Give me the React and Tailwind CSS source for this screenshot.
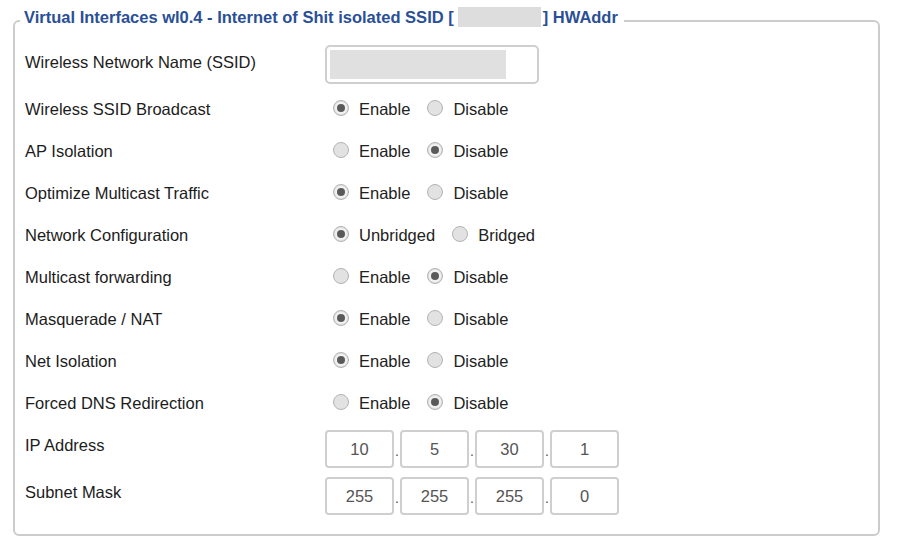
const radioRows = [
  { label: "Wireless SSID Broadcast", options: ["Enable", "Disable"], checked: 0 },
  { label: "AP Isolation", options: ["Enable", "Disable"], checked: 1 },
  { label: "Optimize Multicast Traffic", options: ["Enable", "Disable"], checked: 0 },
  { label: "Network Configuration", options: ["Unbridged", "Bridged"], checked: 0 },
  { label: "Multicast forwarding", options: ["Enable", "Disable"], checked: 1 },
  { label: "Masquerade / NAT", options: ["Enable", "Disable"], checked: 0 },
  { label: "Net Isolation", options: ["Enable", "Disable"], checked: 0 },
  { label: "Forced DNS Redirection", options: ["Enable", "Disable"], checked: 1 },
];

function Radio({ checked }) {
  return (
    <span className="flex h-4 w-4 items-center justify-center rounded-full border border-[#b3b3b3] bg-[#e2e2e2]">
      {checked && (
        <span className="flex h-[12px] w-[12px] items-center justify-center rounded-full bg-[#f2f2f2]">
          <span className="h-2 w-2 rounded-full bg-[#5a5a5a]" />
        </span>
      )}
    </span>
  );
}

function IpInputs({ parts }) {
  return (
    <div className="flex items-end">
      {parts.map((p, i) => (
        <div key={i} className="flex items-end">
          <div className="flex h-[38px] w-[69px] items-center justify-center rounded-[4px] border-2 border-[#cfcfcf] text-[16.5px] text-[#555]">
            {p}
          </div>
          {i < parts.length - 1 && (
            <span className="w-[6px] pb-[10px] text-center text-[14px] leading-none text-[#555]">.</span>
          )}
        </div>
      ))}
    </div>
  );
}

export default function App() {
  return (
    <div className="h-[549px] w-[898px] bg-white font-['Liberation_Sans',Arial,sans-serif] text-[#1c1c1c]">
      <div className="ml-[13px] mt-[20px] flex h-[516px] w-[867px] flex-col rounded-[6px] border-2 border-[#cccccc] pl-[10px]">
        {/* legend */}
        <div className="-mt-[14px] ml-[-5px] flex w-fit items-center bg-white pl-1 pr-[6px] text-[16.5px] font-bold leading-[18px] text-[#2a4f96]">
          <span>Virtual Interfaces wl0.4 - Internet of Shit isolated SSID [</span>
          <span className="-my-px ml-[4px] mr-[2px] h-[20px] w-[83px] bg-[#dddddd]" />
          <span>] HWAddr</span>
        </div>

        {/* SSID */}
        <div className="mt-[19px] flex h-[43px] items-start">
          <div className="mt-[7px] w-[300px] text-[16.5px] leading-[20px]">Wireless Network Name (SSID)</div>
          <div className="h-[39px] w-[214px] rounded-[5px] border-2 border-[#cfcfcf] p-[3px]">
            <div className="h-[29px] w-[176px] bg-[#e0e0e0]" />
          </div>
        </div>

        {radioRows.map((row) => (
          <div key={row.label} className="flex h-[42px] items-center">
            <div className="w-[300px] text-[16.5px] leading-[20px]">{row.label}</div>
            <div className="ml-[8px] flex items-center text-[16.5px] leading-[20px]">
              {row.options.map((opt, i) => (
                <label key={opt} className="mr-[17px] flex items-center">
                  <span className="-mt-[3px]">
                    <Radio checked={row.checked === i} />
                  </span>
                  <span className="ml-[10px] text-[#222]">{opt}</span>
                </label>
              ))}
            </div>
          </div>
        ))}

        {/* IP */}
        <div className="mt-[6px] flex items-start">
          <div className="mt-[5px] w-[300px] text-[16.5px] leading-[20px]">IP Address</div>
          <IpInputs parts={["10", "5", "30", "1"]} />
        </div>
        <div className="mt-[9px] flex items-start">
          <div className="mt-[5px] w-[300px] text-[16.5px] leading-[20px]">Subnet Mask</div>
          <IpInputs parts={["255", "255", "255", "0"]} />
        </div>
      </div>
    </div>
  );
}
